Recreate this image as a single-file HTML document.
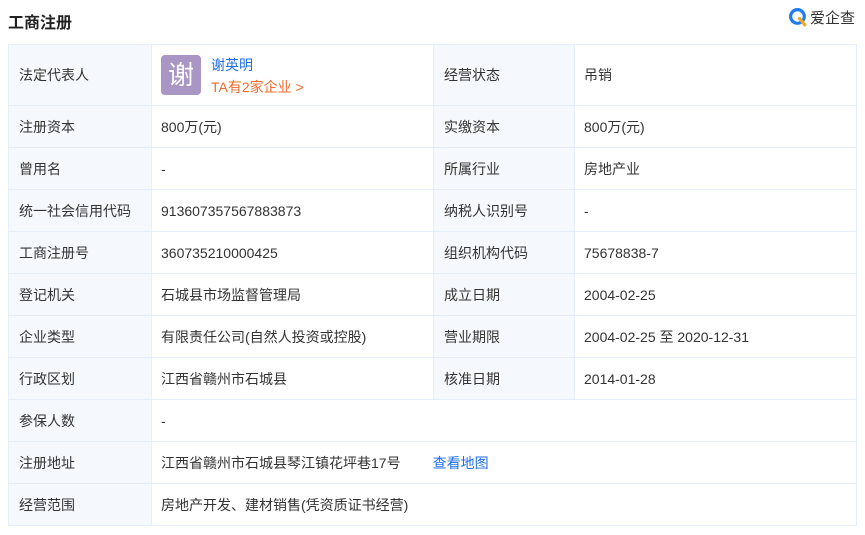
<!DOCTYPE html><html><head><meta charset="utf-8"><style>
body{margin:0;background:#fff;font-family:"Liberation Sans","Noto Sans CJK SC",sans-serif;font-size:14px;color:#333;width:865px;height:535px;overflow:hidden;position:relative}
.h{position:absolute;left:8px;top:9px;font-size:16px;font-weight:bold;color:#222}
.logo{position:absolute;right:10px;top:7px;display:flex;align-items:center;font-size:15px;color:#333}
table{position:absolute;left:8px;top:44px;border-collapse:collapse;width:849px}
td{border:1px solid #e5eefa;padding:0 0 0 9px;height:41px}
td.k{background:#f5f8fd;width:132px;padding-left:10px}
td.v{width:272px}
td.k2{background:#f5f8fd;width:130px;padding-left:10px}
a{color:#1e6ee8;text-decoration:none}
</style></head><body>
<div class="h">工商注册</div>
<div class="logo"><svg width="21" height="21" viewBox="0 0 20 20"><circle cx="9" cy="9" r="6.5" fill="none" stroke="#1e7cf0" stroke-width="3"/><path d="M11 11 L16 17" stroke="#f5a623" stroke-width="3" stroke-linecap="round"/></svg><span style="margin-left:1px">爱企查</span></div>
<table>
<tr><td class="k" style="height:60px">法定代表人</td><td class="v"><div style="display:flex;align-items:center"><div style="width:40px;height:40px;background:#a996c4;border-radius:4px;color:#fff;font-size:26px;text-align:center;line-height:40px">谢</div><div style="margin-left:10px;line-height:22px;margin-top:2px"><a>谢英明</a><br><span style="color:#f26b2f">TA有2家企业 &gt;</span></div></div></td><td class="k2">经营状态</td><td>吊销</td></tr>
<tr><td class="k">注册资本</td><td>800万(元)</td><td class="k2">实缴资本</td><td>800万(元)</td></tr>
<tr><td class="k">曾用名</td><td>-</td><td class="k2">所属行业</td><td>房地产业</td></tr>
<tr><td class="k">统一社会信用代码</td><td>913607357567883873</td><td class="k2">纳税人识别号</td><td>-</td></tr>
<tr><td class="k">工商注册号</td><td>360735210000425</td><td class="k2">组织机构代码</td><td>75678838-7</td></tr>
<tr><td class="k">登记机关</td><td>石城县市场监督管理局</td><td class="k2">成立日期</td><td>2004-02-25</td></tr>
<tr><td class="k">企业类型</td><td>有限责任公司(自然人投资或控股)</td><td class="k2">营业期限</td><td>2004-02-25 至 2020-12-31</td></tr>
<tr><td class="k">行政区划</td><td>江西省赣州市石城县</td><td class="k2">核准日期</td><td>2014-01-28</td></tr>
<tr><td class="k">参保人数</td><td colspan="3">-</td></tr>
<tr><td class="k">注册地址</td><td colspan="3">江西省赣州市石城县琴江镇花坪巷17号<a style="margin-left:32px">查看地图</a></td></tr>
<tr><td class="k">经营范围</td><td colspan="3">房地产开发、建材销售(凭资质证书经营)</td></tr>
</table>
</body></html>
